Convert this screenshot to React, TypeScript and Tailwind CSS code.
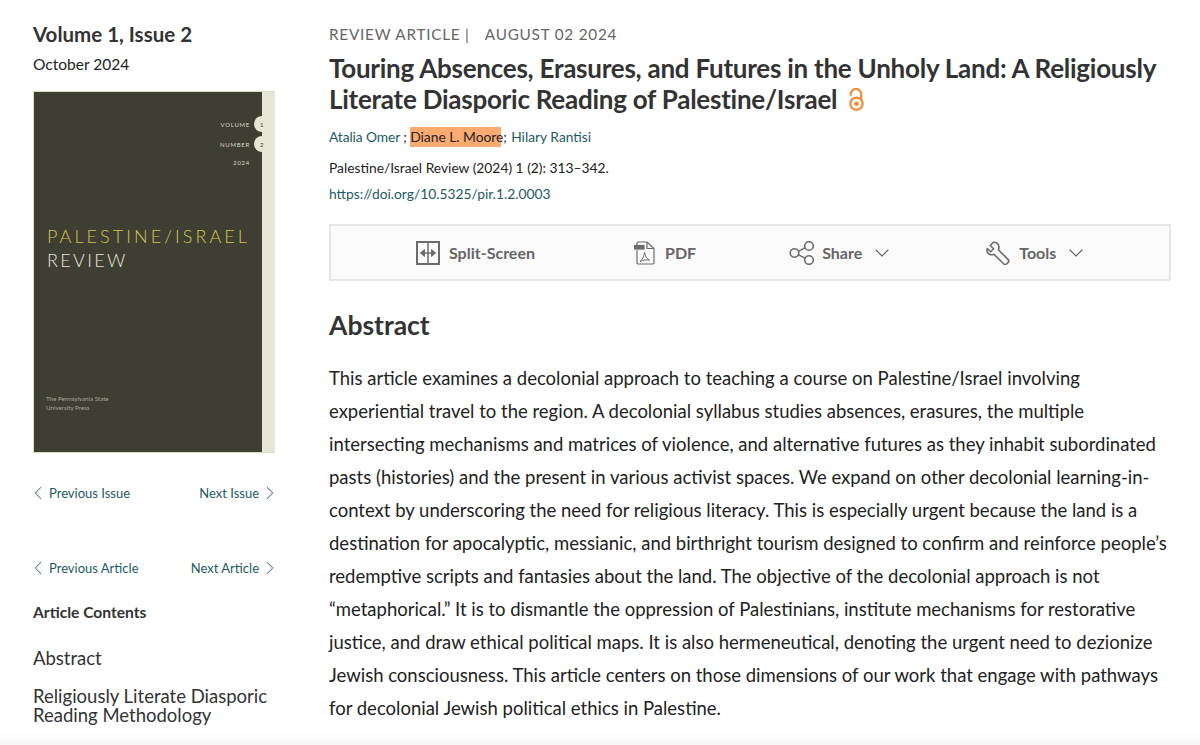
import { ChevronDown, ChevronLeft, ChevronRight } from 'lucide-react';

const abstractLines = [
  'This article examines a decolonial approach to teaching a course on Palestine/Israel involving',
  'experiential travel to the region. A decolonial syllabus studies absences, erasures, the multiple',
  'intersecting mechanisms and matrices of violence, and alternative futures as they inhabit subordinated',
  'pasts (histories) and the present in various activist spaces. We expand on other decolonial learning-in-',
  'context by underscoring the need for religious literacy. This is especially urgent because the land is a',
  'destination for apocalyptic, messianic, and birthright tourism designed to confirm and reinforce people’s',
  'redemptive scripts and fantasies about the land. The objective of the decolonial approach is not',
  '“metaphorical.” It is to dismantle the oppression of Palestinians, institute mechanisms for restorative',
  'justice, and draw ethical political maps. It is also hermeneutical, denoting the urgent need to dezionize',
  'Jewish consciousness. This article centers on those dimensions of our work that engage with pathways',
  'for decolonial Jewish political ethics in Palestine.',
];

function SplitIcon() {
  return (
    <svg width="24" height="24" viewBox="0 0 24 24" fill="none" stroke="#6b6b6b">
      <rect x="1" y="1" width="22" height="22" strokeWidth="2" />
      <path d="M12 1v22" strokeWidth="1.5" />
      <path d="M4.500 12h15" strokeWidth="1.5" />
      <path d="M8.500 8.500l-4 3.500 4 3.500zM15.500 8.500l4 3.500-4 3.500z" fill="#6b6b6b" strokeWidth="1" />
    </svg>
  );
}

function PdfIcon() {
  return (
    <svg width="21" height="24" viewBox="0 0 21 24" fill="none" stroke="#6b6b6b" strokeWidth="1.2">
      <path d="M3 4V2.200C3 1.500 3.500 1 4.200 1H13l7 6.500v14.300c0 .7-.5 1.200-1.200 1.200H4.200C3.500 23 3 22.500 3 21.800V9" />
      <path d="M13 1v6.500h7" />
      <rect x="0.500" y="4.500" width="9.500" height="3.500" fill="#6b6b6b" />
      <path d="M6 20.500c2-1 4-5 4.500-9 .8 4 2.500 6.500 5 7.500-3-.5-6.500 0-9.500 1.500z" strokeWidth="1" />
    </svg>
  );
}

function ShareIcon() {
  return (
    <svg width="26" height="24" viewBox="0 0 26 24" fill="none" stroke="#6b6b6b" strokeWidth="1.6">
      <circle cx="5.500" cy="12" r="4.300" />
      <circle cx="20" cy="5" r="4.300" />
      <circle cx="20" cy="19" r="4.300" />
      <path d="M9.400 10.100l6.700-3.200M9.400 13.900l6.700 3.200" />
    </svg>
  );
}

function WrenchIcon() {
  return (
    <svg width="25" height="24" viewBox="0 0 25 24" fill="none" stroke="#6b6b6b" strokeWidth="1.6" strokeLinejoin="round">
      <path d="M7.500 1.200L4.200 4.500l3.400 3.300-3 3-3.300-3.300C.6 10.300 1.500 12.500 3.200 13.300c1.500.7 3.200.6 4.700-.1l9.700 9.600c.9.900 2.300.9 3.200 0l1.200-1.200c.9-.9.900-2.300 0-3.200l-9.600-9.700c.7-1.500.8-3.200.1-4.700C11.700 2.300 9.500 1.100 7.500 1.200z" />
    </svg>
  );
}

function OpenAccessIcon() {
  return (
    <svg width="15" height="25" viewBox="0 0 16 25" fill="none" stroke="#f28c38" strokeWidth="2.400">
      <path d="M1.800 8.500V6.800a5.600 5.600 0 0 1 11.200 0v6" />
      <circle cx="8" cy="17" r="6.500" />
      <circle cx="8" cy="17" r="2.500" fill="#f28c38" stroke="none" />
    </svg>
  );
}

function SideNav({ prev, next }: { prev: string; next: string }) {
  return (
    <div className="flex items-center justify-between text-[13px] leading-[20px] text-[#1d5a63]">
      <a className="flex items-center">
        <ChevronLeft className="-my-[1px] -ml-[6px] h-[22px] w-[22px] text-[#4a7075]" strokeWidth={1.1} />
        {prev}
      </a>
      <a className="flex items-center">
        {next}
        <ChevronRight className="-my-[1px] -mr-[6px] h-[22px] w-[22px] text-[#4a7075]" strokeWidth={1.1} />
      </a>
    </div>
  );
}

export default function App() {
  return (
    <div className="relative h-[745px] w-[1200px] overflow-hidden bg-white font-['Lato',sans-serif] text-[#333]">
      <div className="flex gap-[54px] pl-[33px] pr-[28px] pt-[21px]">
        {/* Left rail */}
        <aside className="w-[242px] shrink-0">
          <h2 className="text-[20.500px] leading-[26px] font-bold text-[#333]">Volume 1, Issue 2</h2>
          <p className="mt-[7px] text-[15.500px] leading-[20px] text-[#222]">October 2024</p>

          {/* Cover */}
          <div className="mt-[17px] flex h-[362px] w-[242px] border-t border-b border-l border-[#dcdccb] bg-[#e6e6d6]">
            <div className="flex w-[228px] flex-col bg-[#3e3e33] pl-[13px]">
              <div className="mt-[24px] flex flex-col items-end gap-[4px] text-[6px] leading-[13px] tracking-[0.12em] text-[#d8d8cc]">
                <div className="flex items-center gap-[4px]">
                  VOLUME
                  <span className="flex h-[16px] w-[8px] items-center rounded-l-full bg-[#e6e6d6] pl-[6px] text-[#3e3e33]">1</span>
                </div>
                <div className="flex items-center gap-[4px]">
                  NUMBER
                  <span className="flex h-[16px] w-[8px] items-center rounded-l-full bg-[#e6e6d6] pl-[6px] text-[#3e3e33]">2</span>
                </div>
                <div className="mr-[12px]">2024</div>
              </div>
              <p className="mt-[55px] text-[18px] leading-[24px] font-light tracking-[0.17em] whitespace-nowrap text-[#cfc64f]">PALESTINE/ISRAEL</p>
              <p className="text-[18px] leading-[24px] font-light tracking-[0.13em] text-[#e4e4dc]">REVIEW</p>
              <p className="mt-[123px] -ml-[1px] text-[6.200px] leading-[8.500px] text-[#a9a99d]">
                The Pennsylvania State
                <br />
                University Press
              </p>
            </div>
          </div>

          <div className="mt-[30px]">
            <SideNav prev="Previous Issue" next="Next Issue" />
          </div>
          <div className="mt-[55px]">
            <SideNav prev="Previous Article" next="Next Article" />
          </div>

          <h3 className="mt-[24px] text-[15.600px] leading-[20px] font-bold text-[#333]">Article Contents</h3>
          <p className="mt-[26px] text-[18.500px] leading-[20px] text-[#333]">Abstract</p>
          <p className="mt-[19px] text-[18.500px] leading-[19px] text-[#333]">
            Religiously Literate Diasporic
            <br />
            Reading Methodology
          </p>
        </aside>

        {/* Article */}
        <main className="w-[842px] shrink-0">
          <p className="text-[15.300px] leading-[26px] tracking-[0.05em] text-[#666]">
            REVIEW ARTICLE&nbsp;|&nbsp;&nbsp;&nbsp;<span className="ml-[1px]">AUGUST 02 2024</span>
          </p>
          <h1 className="mt-[6px] text-[26px] leading-[31px] font-bold tracking-[-0.25px] whitespace-nowrap text-[#333]">
            Touring Absences, Erasures, and Futures in the Unholy Land: A Religiously
            <br />
            <span className="inline-flex items-center gap-[12px]">
              Literate Diasporic Reading of Palestine/Israel
              <OpenAccessIcon />
            </span>
          </h1>
          <div className="mt-[12px] flex items-center text-[13.800px] leading-[20px] whitespace-nowrap text-[#1d5a63]">
            <a className="tracking-[-0.1px]">Atalia Omer</a>
            <span className="ml-[3px] w-[7px] text-[#222]">;</span>
            <a className="w-[91px] bg-[#fbaa72] text-[#222]">Diane L. Moore</a>
            <span className="ml-[2px] w-[8px] text-[#222]">;</span>
            <a>Hilary Rantisi</a>
          </div>
          <p className="mt-[11px] text-[13.800px] leading-[20px] text-[#222]">Palestine/Israel Review (2024) 1 (2): 313–342.</p>
          <a className="mt-[6px] block text-[13.800px] leading-[20px] text-[#1d5a63]">https://doi.org/10.5325/pir.1.2.0003</a>

          {/* Toolbar */}
          <div className="mt-[20px] flex h-[57px] items-center border-2 border-[#e6e6e6] bg-[#fafafa] text-[16px] font-bold text-[#666]">
            <div className="ml-[85px] flex items-center gap-[9px]"><SplitIcon />Split-Screen</div>
            <div className="ml-[99px] flex items-center gap-[10px]"><PdfIcon />PDF</div>
            <div className="ml-[93px] flex items-center gap-[7px]">
              <ShareIcon />
              Share
              <ChevronDown className="ml-[1px] h-[24px] w-[24px]" strokeWidth={1.1} />
            </div>
            <div className="ml-[92px] flex items-center gap-[8px]">
              <WrenchIcon />
              Tools
              <ChevronDown className="h-[24px] w-[24px]" strokeWidth={1.1} />
            </div>
          </div>

          <h2 className="mt-[26px] text-[26.500px] leading-[36px] font-bold text-[#333]">Abstract</h2>
          <div className="mt-[19px] text-[18.500px] leading-[33px] whitespace-nowrap text-[#222]">
            {abstractLines.map((line) => (
              <p key={line}>{line}</p>
            ))}
          </div>
        </main>
      </div>

      {/* Fade along the bottom edge */}
      <div className="absolute inset-x-0 bottom-0 h-[12px] bg-gradient-to-b from-white to-[#f6f6f6]" />
    </div>
  );
}
